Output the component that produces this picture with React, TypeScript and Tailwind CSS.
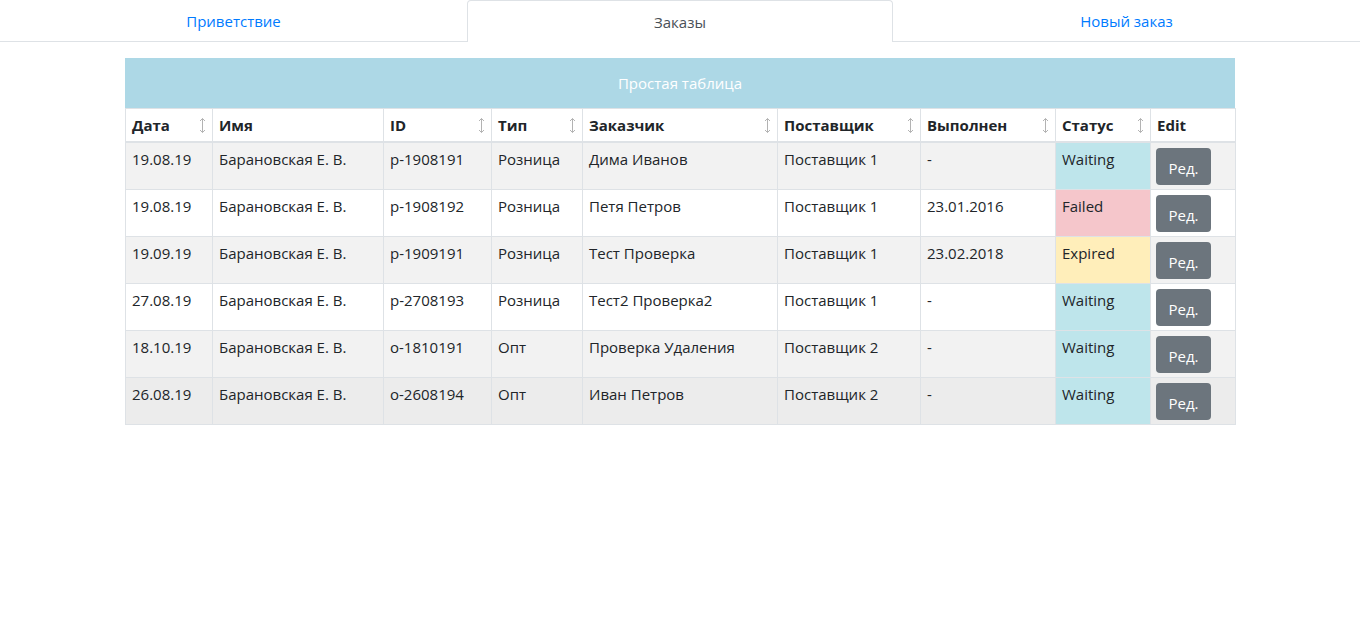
import { ReactNode } from 'react';

type Order = {
  date: string;
  name: string;
  id: string;
  type: string;
  customer: string;
  supplier: string;
  done: string;
  status: 'Waiting' | 'Failed' | 'Expired';
};

const orders: Order[] = [
  { date: '19.08.19', name: 'Барановская Е. В.', id: 'p-1908191', type: 'Розница', customer: 'Дима Иванов', supplier: 'Поставщик 1', done: '-', status: 'Waiting' },
  { date: '19.08.19', name: 'Барановская Е. В.', id: 'p-1908192', type: 'Розница', customer: 'Петя Петров', supplier: 'Поставщик 1', done: '23.01.2016', status: 'Failed' },
  { date: '19.09.19', name: 'Барановская Е. В.', id: 'p-1909191', type: 'Розница', customer: 'Тест Проверка', supplier: 'Поставщик 1', done: '23.02.2018', status: 'Expired' },
  { date: '27.08.19', name: 'Барановская Е. В.', id: 'p-2708193', type: 'Розница', customer: 'Тест2 Проверка2', supplier: 'Поставщик 1', done: '-', status: 'Waiting' },
  { date: '18.10.19', name: 'Барановская Е. В.', id: 'o-1810191', type: 'Опт', customer: 'Проверка Удаления', supplier: 'Поставщик 2', done: '-', status: 'Waiting' },
  { date: '26.08.19', name: 'Барановская Е. В.', id: 'o-2608194', type: 'Опт', customer: 'Иван Петров', supplier: 'Поставщик 2', done: '-', status: 'Waiting' },
];

const statusClass = {
  Waiting: 'bg-[#bee5eb]',
  Failed: 'bg-[#f5c6cb]',
  Expired: 'bg-[#ffeeba]',
};

function SortIcon() {
  return (
    <svg width="7" height="17" viewBox="0 0 7 17" className="shrink-0">
      <path d="M3.5 1.5v14M1 4l2.5-2.5L6 4M1 13l2.5 2.5L6 13" fill="none" stroke="#b3b3b3" strokeWidth="1" />
    </svg>
  );
}

function HeadCell({ children, sortable = true, width }: { children: ReactNode; sortable?: boolean; width: string }) {
  return (
    <th className={`${width} border border-[#dee2e6] border-b-2 px-[6px] py-[5px] text-left align-middle font-bold`}>
      <div className="flex items-center justify-between">
        <span>{children}</span>
        {sortable ? <SortIcon /> : null}
      </div>
    </th>
  );
}

function Cell({ children, className = '' }: { children: ReactNode; className?: string }) {
  return (
    <td className={`border border-[#dee2e6] px-[6px] pt-[5px] align-top ${className}`}>{children}</td>
  );
}

export default function App() {
  return (
    <div className="min-h-screen bg-white text-[15px] leading-[22px] text-[#212529] [font-family:'Open_Sans','Noto_Sans',sans-serif]">
      <nav className="flex h-[42px] border-b border-[#dee2e6]">
        <a className="flex w-[467px] items-center justify-center text-[#007bff]">Приветствие</a>
        <a className="-mb-px flex w-[426px] items-center justify-center rounded-t border border-b-0 border-[#dee2e6] bg-white text-[#495057]">
          Заказы
        </a>
        <a className="flex flex-1 items-center justify-center text-[#007bff]">Новый заказ</a>
      </nav>

      <div className="mx-auto mt-4 w-[1110px]">
        <div className="flex h-[50px] items-center justify-center bg-[#add8e6] text-white">Простая таблица</div>
        <table className="w-full table-fixed border-collapse">
          <thead>
            <tr>
              <HeadCell width="w-[87px]">Дата</HeadCell>
              <HeadCell width="w-[171px]" sortable={false}>Имя</HeadCell>
              <HeadCell width="w-[108px]">ID</HeadCell>
              <HeadCell width="w-[91px]">Тип</HeadCell>
              <HeadCell width="w-[195px]">Заказчик</HeadCell>
              <HeadCell width="w-[143px]">Поставщик</HeadCell>
              <HeadCell width="w-[135px]">Выполнен</HeadCell>
              <HeadCell width="w-[95px]">Статус</HeadCell>
              <HeadCell width="w-[85px]" sortable={false}>Edit</HeadCell>
            </tr>
          </thead>
          <tbody>
            {orders.map((order, index) => (
              <tr
                key={order.id}
                className={index === orders.length - 1 ? 'bg-[#ececec]' : index % 2 === 0 ? 'bg-[#f2f2f2]' : 'bg-white'}
              >
                <Cell>{order.date}</Cell>
                <Cell>{order.name}</Cell>
                <Cell>{order.id}</Cell>
                <Cell>{order.type}</Cell>
                <Cell>{order.customer}</Cell>
                <Cell>{order.supplier}</Cell>
                <Cell>{order.done}</Cell>
                <Cell className={statusClass[order.status]}>{order.status}</Cell>
                <td className="border border-[#dee2e6] px-[5px] pt-[5px] pb-[4px] align-top">
                  <button className="flex h-[37px] w-[55px] items-center justify-center rounded bg-[#6c757d] pt-[2px] text-white">
                    Ред.
                  </button>
                </td>
              </tr>
            ))}
          </tbody>
        </table>
      </div>
    </div>
  );
}
